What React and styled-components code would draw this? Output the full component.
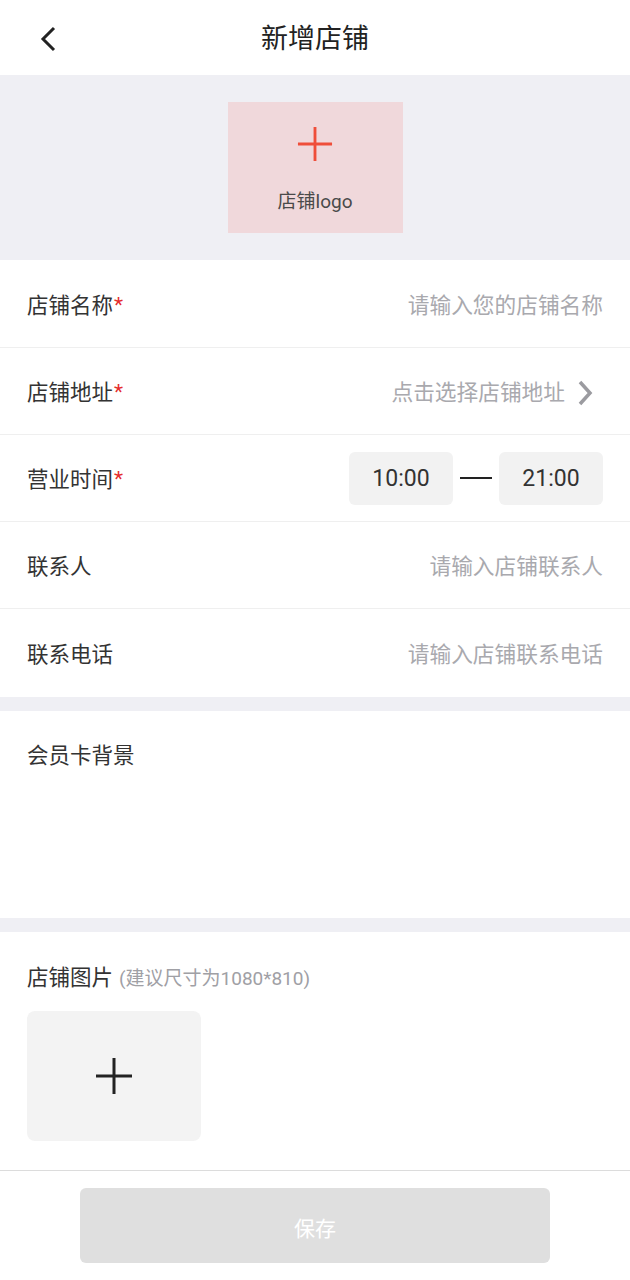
import React from "react";
import styled, { createGlobalStyle } from "styled-components";

const Global = createGlobalStyle`
  html, body { margin: 0; padding: 0; background: #fff; }
  body { font-family: Roboto, "Noto Sans CJK SC", sans-serif; -webkit-font-smoothing: antialiased; }
  * { box-sizing: border-box; }
`;

const Page = styled.div`
  width: 630px;
  min-height: 1280px;
  display: flex;
  flex-direction: column;
  background: #fff;
`;

const Header = styled.header`
  height: 75px;
  display: flex;
  align-items: center;
  justify-content: center;
  position: relative;
  background: #fff;
  padding-top: 4px;
`;

const BackBtn = styled.button`
  position: absolute;
  left: 30px;
  top: 21px;
  width: 36px;
  height: 36px;
  border: 0;
  background: none;
  padding: 0;
  display: flex;
  align-items: center;
  justify-content: center;
`;

const Title = styled.h1`
  margin: 0;
  font-size: 27px;
  font-weight: 400;
  color: #222;
  line-height: 1;
`;

const LogoBand = styled.section`
  height: 185px;
  background: #efeff4;
  display: flex;
  justify-content: center;
  padding-top: 27px;
`;

const LogoBox = styled.div`
  width: 175px;
  height: 131px;
  background: #f0d8db;
  display: flex;
  flex-direction: column;
  align-items: center;
  padding-top: 24px;
`;

const LogoText = styled.span`
  margin-top: 30px;
  font-size: 19px;
  color: #4a4a4a;
  line-height: 1;
`;

const Row = styled.div`
  height: ${(p) => p.$h || 87}px;
  display: flex;
  align-items: center;
  justify-content: space-between;
  padding: 4px 27px 0;
  border-bottom: ${(p) => (p.$last ? "none" : "1px solid #efefef")};
`;

const Label = styled.span`
  font-size: 21.5px;
  color: #333;
  line-height: 1;
  display: flex;
  align-items: flex-start;
`;

const Star = styled.span`
  color: #e52d2d;
  font-size: 21px;
  margin-left: 1px;
`;

const Placeholder = styled.span`
  font-size: 21.7px;
  color: #a9a9ae;
  line-height: 1;
  display: flex;
  align-items: center;
  gap: 12px;
`;

const Chevron = styled.svg`
  margin-right: 10px;
`;

const TimeWrap = styled.div`
  display: flex;
  align-items: center;
  gap: 7px;
  margin-top: -4px;
`;

const TimeBox = styled.div`
  width: 104px;
  height: 53px;
  background: #f2f2f2;
  border-radius: 6px;
  display: flex;
  align-items: center;
  justify-content: center;
  font-size: 23px;
  color: #333;
`;

const Dash = styled.span`
  width: 32px;
  height: 2px;
  background: #222;
`;

const Gap = styled.div`
  height: 14px;
  background: #efeff4;
`;

const CardSection = styled.section`
  height: 207px;
  padding: 34px 27px 0;
`;

const PhotoSection = styled.section`
  height: 239px;
  padding: 31px 27px 0;
  border-bottom: 1px solid #dcdcdc;
`;

const PhotoLabel = styled.div`
  display: flex;
  align-items: baseline;
  gap: 6px;
`;

const Hint = styled.span`
  font-size: 19px;
  color: #a0a0a5;
`;

const UploadBox = styled.div`
  margin-top: 21px;
  width: 174px;
  height: 130px;
  background: #f3f3f3;
  border-radius: 8px;
  display: flex;
  align-items: center;
  justify-content: center;
`;

const Footer = styled.footer`
  padding: 17px 80px 0;
`;

const SaveBtn = styled.button`
  width: 470px;
  height: 75px;
  border: 0;
  border-radius: 6px;
  background: #dfdfdf;
  color: #fff;
  font-size: 21px;
  font-family: inherit;
  padding-top: 4px;
`;

const Plus = ({ color, size = 38, w = 3 }) => (
  <svg width={size} height={size} viewBox="0 0 38 38">
    <path d={`M19 1V37M1 19H37`} stroke={color} strokeWidth={w} fill="none" />
  </svg>
);

export default function App() {
  return (
    <Page>
      <Global />
      <Header>
        <BackBtn>
          <svg width="24" height="28" viewBox="0 0 24 28">
            <path d="M18 3L7 14L18 25" stroke="#222" strokeWidth="3" fill="none" />
          </svg>
        </BackBtn>
        <Title>新增店铺</Title>
      </Header>
      <LogoBand>
        <LogoBox>
          <Plus color="#ef4e3a" size={36} w={3} />
          <LogoText>店铺logo</LogoText>
        </LogoBox>
      </LogoBand>
      <Row $h={88}>
        <Label>店铺名称<Star>*</Star></Label>
        <Placeholder>请输入您的店铺名称</Placeholder>
      </Row>
      <Row>
        <Label>店铺地址<Star>*</Star></Label>
        <Placeholder>
          点击选择店铺地址
          <Chevron width="16" height="26" viewBox="0 0 16 26">
            <path d="M3 2L13 13L3 24" stroke="#9b9ba0" strokeWidth="3.5" fill="none" />
          </Chevron>
        </Placeholder>
      </Row>
      <Row>
        <Label>营业时间<Star>*</Star></Label>
        <TimeWrap>
          <TimeBox>10:00</TimeBox>
          <Dash />
          <TimeBox>21:00</TimeBox>
        </TimeWrap>
      </Row>
      <Row>
        <Label>联系人</Label>
        <Placeholder>请输入店铺联系人</Placeholder>
      </Row>
      <Row $h={88} $last>
        <Label>联系电话</Label>
        <Placeholder>请输入店铺联系电话</Placeholder>
      </Row>
      <Gap />
      <CardSection>
        <Label>会员卡背景</Label>
      </CardSection>
      <Gap />
      <PhotoSection>
        <PhotoLabel>
          <Label>店铺图片</Label>
          <Hint>(建议尺寸为1080*810)</Hint>
        </PhotoLabel>
        <UploadBox>
          <Plus color="#222" size={38} w={3} />
        </UploadBox>
      </PhotoSection>
      <Footer>
        <SaveBtn>保存</SaveBtn>
      </Footer>
    </Page>
  );
}
